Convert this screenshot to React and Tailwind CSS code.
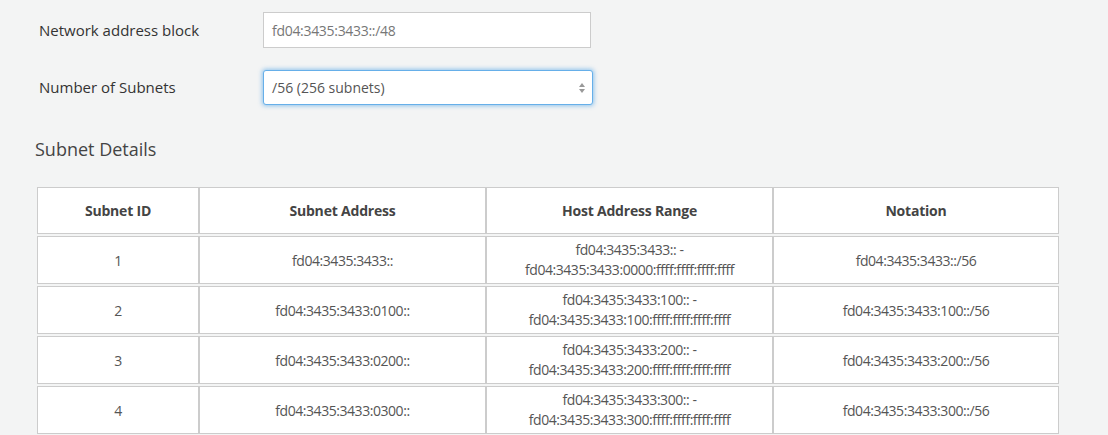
import React from 'react';

const rows = [
  { id: 1, addr: 'fd04:3435:3433::', from: 'fd04:3435:3433::', to: 'fd04:3435:3433:0000:ffff:ffff:ffff:ffff', notation: 'fd04:3435:3433::/56' },
  { id: 2, addr: 'fd04:3435:3433:0100::', from: 'fd04:3435:3433:100::', to: 'fd04:3435:3433:100:ffff:ffff:ffff:ffff', notation: 'fd04:3435:3433:100::/56' },
  { id: 3, addr: 'fd04:3435:3433:0200::', from: 'fd04:3435:3433:200::', to: 'fd04:3435:3433:200:ffff:ffff:ffff:ffff', notation: 'fd04:3435:3433:200::/56' },
  { id: 4, addr: 'fd04:3435:3433:0300::', from: 'fd04:3435:3433:300::', to: 'fd04:3435:3433:300:ffff:ffff:ffff:ffff', notation: 'fd04:3435:3433:300::/56' }
];

const App = () => {
  return (
    <div className="min-h-[435px] bg-[#f3f4f4] pl-[37px] pr-[49px] pt-[12px] font-['Open_Sans',sans-serif] text-[#333]">
      {/* Form */}
      <div className="flex items-center">
        <label className="w-[226px] pl-[2px] text-[15px]">Network address block</label>
        <div className="flex h-[36px] w-[328px] items-center border border-[#ccc] bg-white px-[8px] text-[14px] text-[#777] tracking-[-0.3px]">
          fd04:3435:3433::/48
        </div>
      </div>
      <div className="mt-[22px] flex items-center">
        <label className="w-[226px] pl-[2px] text-[15px]">Number of Subnets</label>
        <div className="flex h-[35px] w-[330px] items-center justify-between rounded-[3px] border border-[#66afe9] bg-white pl-[8px] pr-[6px] text-[14px] text-[#555] shadow-[0_0_4px_1px_rgba(102,175,233,0.7)]">
          <span>/56 (256 subnets)</span>
          <svg width="8" height="12" viewBox="0 0 8 12">
            <path d="M4 1 L7 5 H1 Z" fill="#999" />
            <path d="M4 11 L7 7 H1 Z" fill="#999" />
          </svg>
        </div>
      </div>

      {/* Subnet Details */}
      <h2 className="mt-[32px] -ml-[2px] text-[18px] leading-[24px] text-[#444]">Subnet Details</h2>

      <table className="mt-[24px] w-[1022px] border-separate border-spacing-x-0 border-spacing-y-[2px] text-center text-[14px] text-[#444]">
        <thead>
          <tr>
            <th className="h-[47px] w-[162px] border border-[#ccc] bg-white font-bold tracking-[-0.2px]">Subnet ID</th>
            <th className="h-[47px] w-[287px] border border-[#ccc] bg-white font-bold tracking-[-0.2px]">Subnet Address</th>
            <th className="h-[47px] w-[287px] border border-[#ccc] bg-white font-bold tracking-[-0.2px]">Host Address Range</th>
            <th className="h-[47px] border border-[#ccc] bg-white font-bold tracking-[-0.2px]">Notation</th>
          </tr>
        </thead>
        <tbody className="tracking-[-0.45px] text-[#555]">
          {rows.map((r) => (
            <tr key={r.id}>
              <td className="h-[48px] border border-[#ccc] bg-white">{r.id}</td>
              <td className="h-[48px] border border-[#ccc] bg-white">{r.addr}</td>
              <td className="h-[48px] border border-[#ccc] bg-white leading-[20px]">
                {r.from} -
                <br />
                {r.to}
              </td>
              <td className="h-[48px] border border-[#ccc] bg-white">{r.notation}</td>
            </tr>
          ))}
        </tbody>
      </table>
    </div>
  );
};

export default App;
